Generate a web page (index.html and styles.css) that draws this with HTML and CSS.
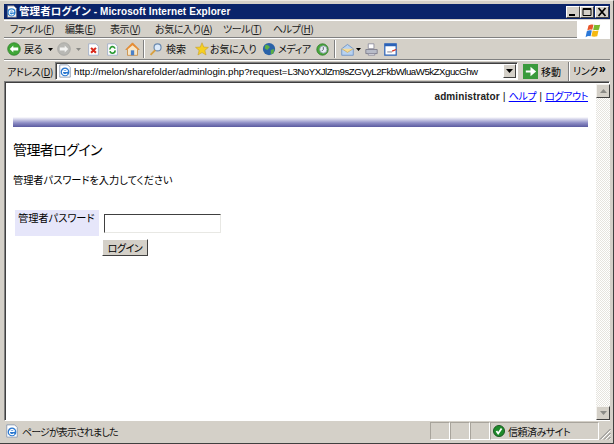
FILE: index.html
```html
<!DOCTYPE html>
<html lang="ja">
<head>
<meta charset="utf-8">
<title>管理者ログイン</title>
<link rel="stylesheet" href="styles.css">
</head>
<body>
<div class="window">
  <div class="titlebar">
    <svg class="ico-title" viewBox="0 0 16 16"><path d="M3 1h8l3 3v11H3z" fill="#fff" stroke="#667"/><circle cx="8" cy="9" r="5" fill="#2a7fd0"/><path d="M5 8.500h6M10.500 11a3 3 0 1 1 .5-2.500" fill="none" stroke="#fff" stroke-width="1.300"/></svg>
    <span class="title-text"><span class="title-ja">管理者ログイン</span> - Microsoft Internet Explorer</span>
    <div class="capbtns">
      <span class="capbtn"><svg viewBox="0 0 12 10" class="capico"><path d="M2 7h6v2H2z"/></svg></span>
      <span class="capbtn"><svg viewBox="0 0 12 10" class="capico"><path d="M2 1.500h8v7H2z" fill="none" stroke="#000"/><path d="M2 1h8v2H2z"/></svg></span>
      <span class="capbtn capclose"><svg viewBox="0 0 12 10" class="capico"><path d="M2.500 1l7 8M9.500 1l-7 8" stroke="#000" stroke-width="1.800" fill="none"/></svg></span>
    </div>
  </div>
  <div class="menubar">
    <nav class="menus">
      <span>ファイル(<u>F</u>)</span><span>編集(<u>E</u>)</span><span>表示(<u>V</u>)</span><span>お気に入り(<u>A</u>)</span><span>ツール(<u>T</u>)</span><span>ヘルプ(<u>H</u>)</span>
    </nav>
    <div class="flag">
      <svg viewBox="0 0 20 18" width="17" height="15"><path d="M4 3q3-2 6-1L8.500 8q-3-1-6 1z" fill="#e8562a"/><path d="M11 2q3 1 7 0l-1.500 6q-4 1-7 0z" fill="#7cb82e"/><path d="M2 10q3-2 6-1L6.500 16q-3-1-6 1z" fill="#2a78d8"/><path d="M9 9q3 1 7 0l-1.500 7q-4 1-7 0z" fill="#f6b912"/></svg>
    </div>
  </div>
  <div class="toolbar">
    <svg class="ico14 tb-back" viewBox="0 0 20 20"><circle cx="10" cy="10" r="9" fill="#3fa636" stroke="#2c7a2a"/><path d="M4 10l5-5v3h7v4H9v3z" fill="#fff"/></svg>
    <span class="tb-label lb-back">戻る</span>
    <svg class="caret tb-caret1" viewBox="0 0 5 3"><path d="M0 0h5L2.500 3z" fill="#000"/></svg>
    <svg class="ico14 tb-fwd" viewBox="0 0 20 20"><circle cx="10" cy="10" r="9" fill="#b8b8b4" stroke="#a0a09c"/><path d="M16 10l-5-5v3H4v4h7v3z" fill="#f2f2f0"/></svg>
    <svg class="caret tb-caret2" viewBox="0 0 5 3"><path d="M0 0h5L2.500 3z" fill="#8a8a86"/></svg>
    <svg class="ico13 tb-ic" viewBox="0 0 16 16"><path d="M2 1h9l3 3v11H2z" fill="#fff" stroke="#9aaac8"/><path d="M5 6l6 6M11 6l-6 6" stroke="#d8281c" stroke-width="2.600"/></svg>
    <svg class="ico13 tb-ic" viewBox="0 0 16 16"><path d="M2 1h9l3 3v11H2z" fill="#fff" stroke="#9aaac8"/><path d="M5 8a3 3 0 0 1 6-1M11 9a3 3 0 0 1-6 1" fill="none" stroke="#2c9a34" stroke-width="2"/></svg>
    <svg class="ico15 tb-ic" viewBox="0 0 18 18"><path d="M9 1L1 9h2v7h12V9h2z" fill="#f6e6c8" stroke="#c88a40"/><path d="M9 1L1 9h2l6-5 6 5h2z" fill="#e88a30"/><path d="M7 10h4v6H7z" fill="#4a80c8"/></svg>
    <span class="tb-sep"></span>
    <svg class="ico14 tb-search" viewBox="0 0 18 18"><circle cx="11" cy="7" r="4.500" fill="#dceafa" stroke="#6a8ab0" stroke-width="1.500"/><path d="M8 10.500L2 16.500" stroke="#d8a040" stroke-width="2.500"/></svg>
    <span class="tb-label lb-search">検索</span>
    <svg class="ico14 tb-star" viewBox="0 0 18 18"><path d="M9 1l2.300 5.500 6 .4-4.600 3.900 1.500 5.900L9 13.500l-5.200 3.200 1.500-5.900L.700 6.900l6-.4z" fill="#f6d020" stroke="#c8a030" stroke-width=".8"/></svg>
    <span class="tb-label lb-fav">お気に入り</span>
    <svg class="ico14 tb-media" viewBox="0 0 16 16"><circle cx="8" cy="8" r="7" fill="#2a62a8"/><path d="M4 3q4 0 5 3L6 9 3 7zM10 9l4-1-1 5-3 1z" fill="#5cae44"/></svg>
    <span class="tb-label lb-media">メディア</span>
    <svg class="ico13 tb-hist" viewBox="0 0 16 16"><circle cx="8" cy="8" r="7" fill="#4aa83c" stroke="#2c7a2a"/><circle cx="9" cy="8" r="4.500" fill="#e8eef4" stroke="#8898a8"/><path d="M9 5v3l-2 2" stroke="#445" fill="none"/></svg>
    <span class="tb-sep tb-sep2"></span>
    <svg class="ico13 tb-mail" viewBox="0 0 18 18"><path d="M1 8l8-6 8 6v9H1z" fill="#b8d2f0" stroke="#5a86c0"/><path d="M1 8l8 5 8-5" fill="#f6dc98" stroke="#c8a860"/></svg>
    <svg class="caret tb-caret3" viewBox="0 0 5 3"><path d="M0 0h5L2.500 3z" fill="#000"/></svg>
    <svg class="ico13 tb-print" viewBox="0 0 16 16"><path d="M4 1h7v6H4z" fill="#fff" stroke="#889"/><path d="M1 8h14v5H1z" fill="#b8bcc8" stroke="#778"/><path d="M4 13h8v2H4z" fill="#e8e8ec" stroke="#889"/></svg>
    <svg class="ico13 tb-edit" viewBox="0 0 16 16"><path d="M1 1h14v14H1z" fill="#fff" stroke="#2a62b8" stroke-width="1.500"/><path d="M1 1h14v3H1z" fill="#2a62b8"/><path d="M4 11h6" stroke="#667"/><path d="M10 10l5-2" stroke="#d83020" stroke-width="1.500"/></svg>
  </div>
  <div class="addressbar">
    <span class="addr-label">アドレス(<u>D</u>)</span>
    <div class="addr-field">
      <svg class="ico14" viewBox="0 0 16 16"><path d="M2 1h9l3 3v11H2z" fill="#fff" stroke="#8898b0"/><circle cx="8" cy="9" r="5" fill="#2a78d0"/><path d="M5 8.500h6M10.500 11a3 3 0 1 1 .5-2.500" fill="none" stroke="#fff" stroke-width="1.300"/></svg>
      <span class="addr-url">http://melon/sharefolder/adminlogin.php?request=<span class="addr-query">L3NoYXJlZm9sZGVyL2FkbWluaW5kZXgucGhw</span></span>
      <span class="addr-drop"><svg viewBox="0 0 7 4" width="7" height="4"><path d="M0 0h7L3.500 4z" fill="#000"/></svg></span>
    </div>
    <svg class="go-ico" viewBox="0 0 16 16"><path d="M0 0h16v16H0z" fill="#3a9a3c"/><path d="M3 7h5V3l6 5-6 5V9H3z" fill="#fff"/></svg>
    <span class="go-label">移動</span>
    <span class="links">リンク</span>
    <span class="chev">»</span>
  </div>
  <div class="viewport">
    <main class="page">
      <div class="userline"><b class="user">administrator</b> | <a href="#">ヘルプ</a> | <a href="#">ログアウト</a></div>
      <div class="band"></div>
      <h1>管理者ログイン</h1>
      <p class="lead">管理者パスワードを入力してください</p>
      <form class="login">
        <div class="field-label">管理者パスワード</div>
        <div class="field-input"><input type="password" class="pw"></div>
        <div class="field-submit"><button type="button" class="btn">ログイン</button></div>
      </form>
    </main>
    <div class="scrollbar">
      <span class="sbtn"><svg viewBox="0 0 7 4" width="7" height="4"><path d="M0 4h7L3.500 0z" fill="#8a8a86"/></svg></span>
      <span class="strack"></span>
      <span class="sbtn"><svg viewBox="0 0 7 4" width="7" height="4"><path d="M0 0h7L3.500 4z" fill="#8a8a86"/></svg></span>
    </div>
  </div>
  <div class="statusbar">
    <div class="st-main">
      <svg class="ico14" viewBox="0 0 16 16"><path d="M2 1h9l3 3v11H2z" fill="#fff" stroke="#8898b0"/><circle cx="8" cy="9" r="5" fill="#2a78d0"/><path d="M5 8.500h6M10.500 11a3 3 0 1 1 .5-2.500" fill="none" stroke="#fff" stroke-width="1.300"/></svg>
      <span class="st-text">ページが表示されました</span>
    </div>
    <div class="st-cell"></div><div class="st-cell"></div><div class="st-cell"></div>
    <div class="st-zone">
      <svg class="ico-zone" viewBox="0 0 14 14"><circle cx="7" cy="7" r="6.500" fill="#1f8a2a" stroke="#14501c"/><path d="M4 7l2 3 4-6" stroke="#fff" stroke-width="2" fill="none"/></svg>
      <span class="st-zone-text">信頼済みサイト</span>
    </div>
    <div class="st-grip">
      <svg viewBox="0 0 12 12" width="12" height="12"><path d="M11.500 1L1 11.500M11.500 5L5 11.500M11.500 9L9 11.500" stroke="#808080" fill="none"/><path d="M11.500 2.500L2.500 11.500M11.500 6.500L6.500 11.500M11.500 10.500L10.500 11.500" stroke="#fff" fill="none"/></svg>
    </div>
  </div>
</div>
</body>
</html>
```
FILE: styles.css
```css
* { box-sizing: border-box; }
html, body { margin: 0; padding: 0; }
body {
  width: 614px; height: 444px; overflow: hidden;
  font-family: "Noto Sans CJK JP", "Liberation Sans", sans-serif;
  font-feature-settings: "palt";
  font-size: 10px; color: #000; background: #d4d0c8;
}
.window {
  width: 614px; height: 444px; padding: 3px 3px 3px 4px;
  display: flex; flex-direction: column;
  background: #d4d0c8;
  border-bottom: 1px solid #404040; border-right: 1px solid #404040;
  border-top: 1px solid #ece9e2;
}
.ico13, .ico14, .ico15, .ico-title, .ico-zone, .go-ico { flex: none; display: block; }
.ico13 { width: 13px; height: 13px; }
.ico14 { width: 14px; height: 14px; }
.ico15 { width: 15px; height: 15px; }
.titlebar {
  height: 15px; flex: none; background: #0a246a; color: #fff;
  display: flex; align-items: center; padding: 0 1px;
  overflow: hidden;
}
.ico-title { width: 13px; height: 13px; }
.title-text {
  margin-left: 1px; font-weight: 700; font-size: 10px; letter-spacing: .1px;
  font-family: "Liberation Sans", "Noto Sans CJK JP", sans-serif; white-space: nowrap;
  flex: 1; line-height: 14px;
}
.title-ja { font-size: 10.500px; }
.capbtns { display: flex; }
.capbtn {
  width: 14px; height: 12px; background: #d4d0c8; display: flex; align-items: center; justify-content: center;
  border: 1px solid; border-color: #fff #404040 #404040 #fff;
}
.capclose { margin-left: 1px; }
.capico { width: 12px; height: 10px; display: block; flex: none; }
.menubar {
  height: 18px; flex: none; margin-top: 1px; display: flex; align-items: center;
  border-top: 1px solid #fff; border-bottom: 1px solid #808080;
}
.menus {
  display: grid; flex: 1; grid-template-columns: 55px 45px 45px 68px 50px auto;
  padding-left: 6px; color: #202020; line-height: 16px; letter-spacing: -.4px; white-space: nowrap;
}
.flag {
  width: 33px; height: 18px; background: #fff; display: flex; align-items: center; justify-content: center;
  align-self: flex-start; margin-top: 0; flex: none;
}
.toolbar {
  height: 22px; flex: none; display: flex; align-items: center; padding-left: 3px;
  border-top: 1px solid #fff; border-bottom: 1px solid #808080;
}
.tb-label { color: #111; white-space: nowrap; line-height: 16px; flex: none; letter-spacing: -.2px; }
.lb-back { margin-left: 3px; width: 21px; }
.lb-search { margin-left: 3px; width: 22px; letter-spacing: 0; }
.lb-fav { margin-left: 1px; width: 43px; }
.lb-media { margin-left: 2px; width: 29px; letter-spacing: -.4px; }
.caret { width: 5px; height: 3px; flex: none; display: block; }
.tb-caret1 { margin-left: 3px; }
.tb-fwd { margin-left: 4px; }
.tb-caret2 { margin-left: 5px; }
.tb-ic { margin-left: 6px; }
.tb-sep { width: 2px; height: 18px; margin-left: 3px; border-left: 1px solid #808080; border-right: 1px solid #fff; flex: none; }
.tb-search { margin-left: 4px; }
.tb-star { margin-left: 7px; }
.tb-media { margin-left: 9px; }
.tb-hist { margin-left: 9px; }
.tb-sep2 { margin-left: 5px; }
.tb-mail { margin-left: 5px; }
.tb-caret3 { margin-left: 2px; }
.tb-print { margin-left: 4px; }
.tb-edit { margin-left: 6px; }
.addressbar {
  height: 21px; flex: none; display: flex; align-items: center; padding-left: 3px;
  border-top: 1px solid #fff;
}
.addr-label { width: 48px; flex: none; color: #111; white-space: nowrap; letter-spacing: -.4px; }
.addr-field {
  width: 463px; height: 18px; flex: none; display: flex; align-items: center; background: #fff;
  border: 1px solid; border-color: #808080 #fff #fff #808080; box-shadow: inset 1px 1px 0 #404040;
  padding-left: 2px; overflow: hidden;
}
.addr-url {
  flex: 1; margin-left: 2px; font-family: "Liberation Sans", sans-serif; font-size: 9.700px;
  white-space: nowrap; overflow: hidden; min-width: 0; line-height: 15px;
}
.addr-query { letter-spacing: -.5px; }
.addr-drop {
  width: 13px; height: 14px; flex: none; background: #d4d0c8; display: flex; align-items: center; justify-content: center;
  border: 1px solid; border-color: #fff #404040 #404040 #fff; margin-right: 1px; margin-left: 6px;
}
.go-ico { width: 15px; height: 15px; margin-left: 5px; }
.go-label { margin-left: 3px; white-space: nowrap; width: 27px; flex: none; }
.links { padding-left: 4px; border-left: 1px solid #808080; box-shadow: inset 1px 0 0 #fff; height: 19px; line-height: 17px; width: 30px; white-space: nowrap; flex: none; letter-spacing: -.4px; }
.chev { font-weight: 700; font-size: 12px; line-height: 12px; margin-left: 1px; font-family: "Liberation Sans", sans-serif; margin-top: -4px; flex: none; }
.viewport {
  flex: 1; min-height: 0; display: flex; background: #fff;
  border: 1px solid; border-color: #808080 transparent #fff #808080;
  box-shadow: inset 1px 1px 0 #404040;
  padding: 2px 0 0 1px;
}
.page { flex: 1; min-width: 0; padding: 0 8px 0 7px; }
.userline {
  text-align: right; font-size: 11px; line-height: 14px; padding-top: 5px; height: 33px;
  font-family: "Liberation Sans", "Noto Sans CJK JP", sans-serif; color: #222;
}
.user { font-weight: 700; font-size: 10px; letter-spacing: .1px; }
.userline a { color: #00f; text-decoration: underline; font-family: "Noto Sans CJK JP", sans-serif; font-size: 10px; letter-spacing: -.4px; }
.band { height: 10px; background: linear-gradient(#fff, #d8d8ec 20%, #8c8cc4 60%, #5a5aa0); }
h1 { margin: 13px 0 0; font-size: 14px; font-weight: 400; line-height: 18px; color: #000; letter-spacing: -.6px; }
.lead { margin: 14px 0 0; font-size: 10.200px; line-height: 16px; }
.login {
  display: grid; grid-template-columns: 84px auto; justify-content: start;
  margin: 22px 0 0 2px; column-gap: 3px; row-gap: 3px;
}
.field-label {
  height: 26px; background: #e6e6fa; font-size: 10.200px; line-height: 14px; padding: 1px 0 0 3px; white-space: nowrap;
}
.field-input { padding: 4px 0 0 2px; }
.pw {
  display: block; width: 117px; height: 19px; background: #fff; margin: 0; padding: 0 2px;
  border: 1px solid; border-color: #404040 #e8e8e4 #e8e8e4 #404040; outline: none;
}
.field-submit { grid-column: 2; }
.btn {
  display: block; width: 46px; height: 17px; padding: 0; background: #d4d0c8; font-family: "Noto Sans CJK JP", sans-serif; font-size: 10px; font-feature-settings: "palt"; letter-spacing: -.5px; color: #000;
  border: 1px solid; border-color: #fff #404040 #404040 #fff; line-height: 13px;
}
.scrollbar { width: 14px; flex: none; display: flex; flex-direction: column; margin-right: -1px; }
.sbtn {
  height: 14px; flex: none; background: #d4d0c8; display: flex; align-items: center; justify-content: center;
  border: 1px solid; border-color: #f4f2ee #404040 #404040 #f4f2ee;
}
.strack { flex: 1; background: repeating-conic-gradient(#fff 0 25%, #e6e4de 0 50%) 0 0 / 2px 2px; }
.statusbar {
  height: 18px; flex: none; display: flex; align-items: stretch; margin-top: 1px;
  color: #111;
}
.st-main { width: 426px; display: flex; align-items: center; gap: 3px; padding-left: 1px; white-space: nowrap; flex: none; }
.st-text { letter-spacing: -.9px; }
.st-cell { width: 20px; flex: none; border: 1px solid; border-color: #a8a49c #fff #fff #a8a49c; }
.st-zone {
  width: 109px; flex: none; display: flex; align-items: center; gap: 3px; padding-left: 2px;
  border: 1px solid; border-color: #a8a49c #fff #fff #a8a49c; white-space: nowrap;
}
.st-zone-text { letter-spacing: -.5px; }
.ico-zone { width: 12px; height: 12px; }
.st-grip { flex: 1; display: flex; align-items: flex-end; justify-content: flex-end; }
```
